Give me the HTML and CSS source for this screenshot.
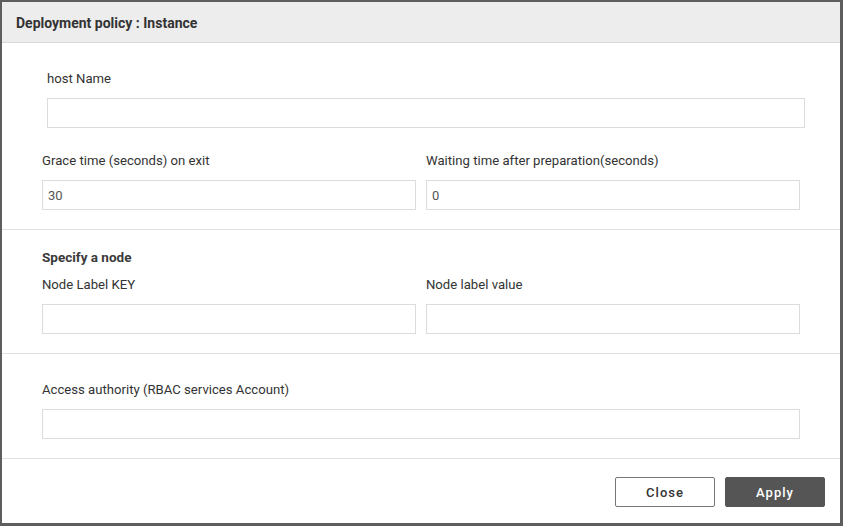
FILE: index.html
```html
<!DOCTYPE html>
<html>
<head>
<meta charset="utf-8">
<link rel="stylesheet" href="styles.css">
</head>
<body>
<div class="dialog">
  <div class="header">Deployment policy : Instance</div>
  <div class="section">
    <div class="field host">
      <div class="label">host Name</div>
      <div class="input"></div>
    </div>
    <div class="row">
      <div class="field">
        <div class="label">Grace time (seconds) on exit</div>
        <div class="input">30</div>
      </div>
      <div class="field">
        <div class="label">Waiting time after preparation(seconds)</div>
        <div class="input">0</div>
      </div>
    </div>
  </div>
  <div class="section compact">
    <div class="heading">Specify a node</div>
    <div class="row tight">
      <div class="field">
        <div class="label">Node Label KEY</div>
        <div class="input"></div>
      </div>
      <div class="field">
        <div class="label">Node label value</div>
        <div class="input"></div>
      </div>
    </div>
  </div>
  <div class="section">
    <div class="field">
      <div class="label">Access authority (RBAC services Account)</div>
      <div class="input"></div>
    </div>
  </div>
  <div class="footer">
    <button class="btn">Close</button>
    <button class="btn primary">Apply</button>
  </div>
</div>
</body>
</html>
```
FILE: styles.css
```css
html, body {
  margin: 0;
  padding: 0;
}
body {
  background: #5e5e5e;
  padding: 2px 3px 3px 2px;
  font-family: Roboto, "Liberation Sans", sans-serif;
  overflow: hidden;
  height: 526px;
  box-sizing: border-box;
}
.dialog {
  background: #fff;
  width: 838px;
  height: 521px;
  display: flex;
  flex-direction: column;
}
.header {
  height: 41px;
  box-sizing: border-box;
  padding-top: 1px;
  background: #ededed;
  border-bottom: 1px solid #d9d9d9;
  display: flex;
  align-items: center;
  padding-left: 14px;
  font-size: 14px;
  font-weight: 700;
  color: #333;
}
.section {
  padding: 25px 40px 19px 40px;
  border-bottom: 1px solid #e2e2e2;
  display: flex;
  flex-direction: column;
}
.section.compact {
  padding-top: 16px;
}
.row {
  display: flex;
  gap: 10px;
  margin-top: 22px;
}
.row.tight {
  margin-top: 8px;
}
.field {
  flex: 1;
  display: flex;
  flex-direction: column;
}
.field.host {
  margin-left: 5px;
  margin-right: -5px;
}
.label, .heading {
  font-size: 13.15px;
  line-height: 20px;
  padding-top: 1px;
  height: 20px;
  box-sizing: border-box;
  color: #333;
}
.heading {
  font-size: 13.5px;
  font-weight: 700;
  color: #3a3a3a;
}
.input {
  margin-top: 10px;
  height: 30px;
  box-sizing: border-box;
  border: 1px solid #dcdcdc;
  padding: 1px 5px 0;
  font-size: 13px;
  line-height: 28px;
  color: #555;
}
.footer {
  flex: 1;
  display: flex;
  justify-content: flex-end;
  align-items: flex-start;
  gap: 10px;
  padding: 18px 15px 0 0;
}
.btn {
  width: 100px;
  height: 30px;
  border: 1px solid #777;
  background: #fff;
  border-radius: 2px;
  font-family: Roboto, "Liberation Sans", sans-serif;
  font-size: 13px;
  font-weight: 500;
  letter-spacing: 1px;
  color: #333;
  padding: 0;
}
.btn.primary {
  background: #555;
  border-color: #555;
  color: #fff;
}
```
